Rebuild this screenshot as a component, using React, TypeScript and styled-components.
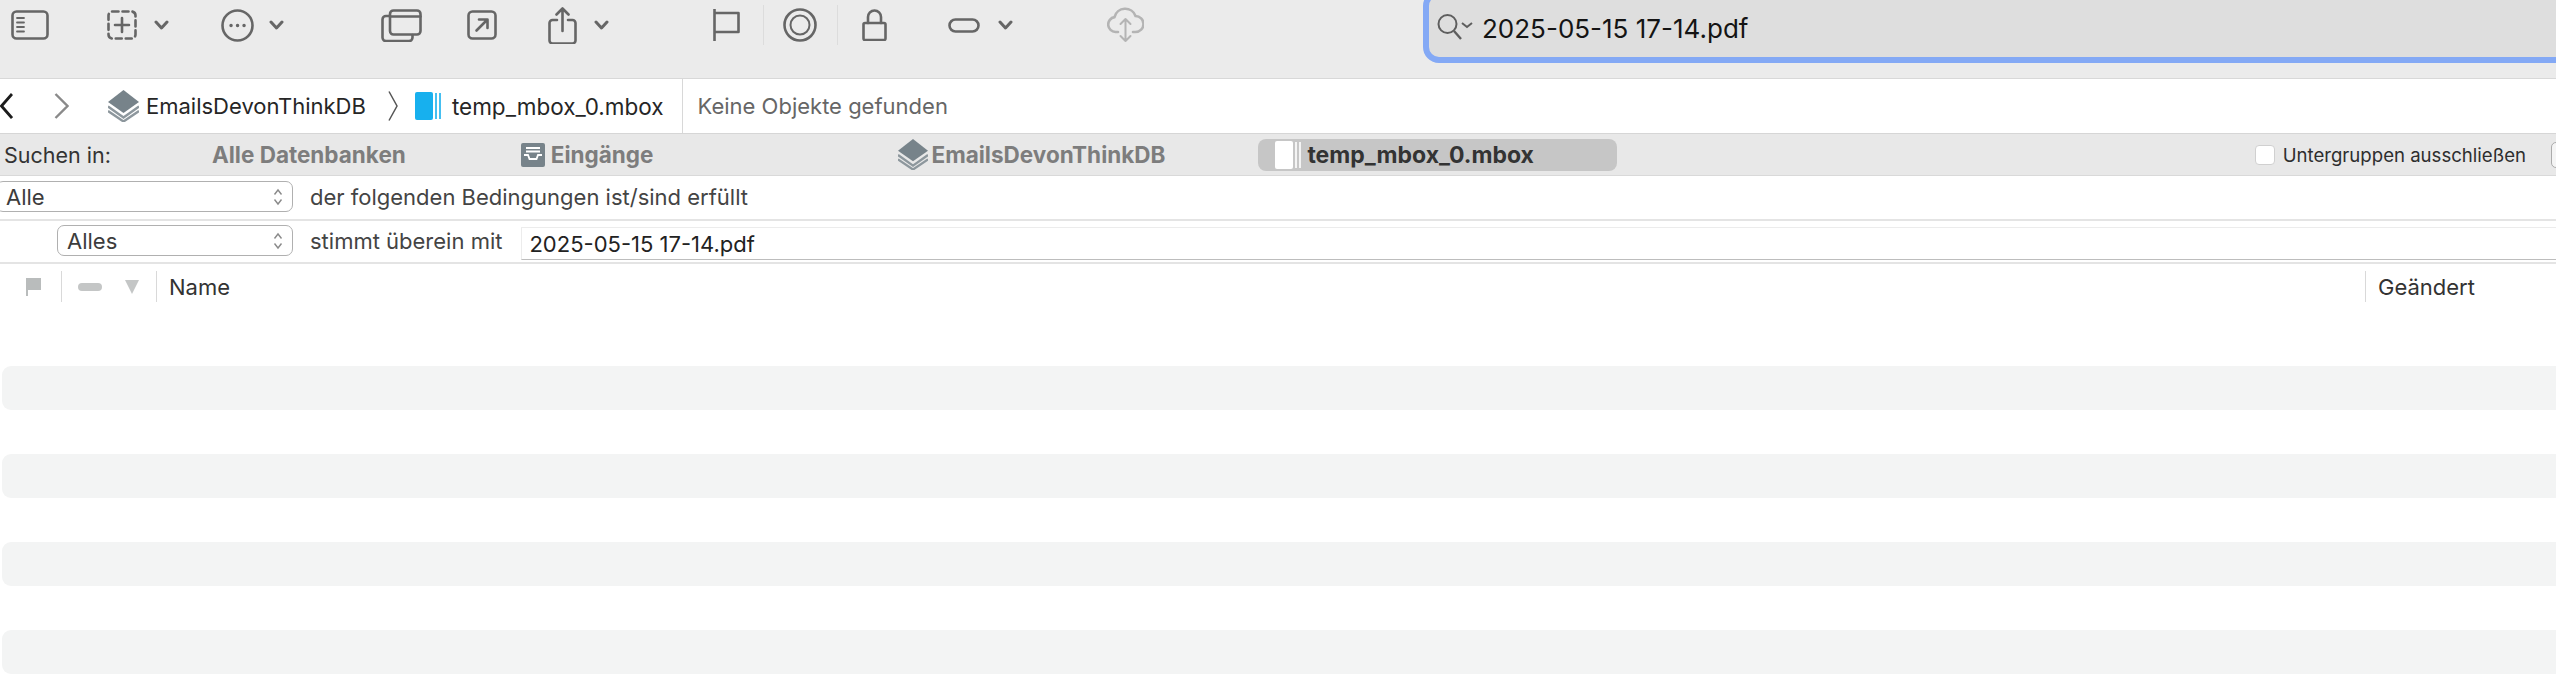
import styled, { createGlobalStyle } from 'styled-components';

const GlobalStyle = createGlobalStyle`
  html, body {
    margin: 0;
    padding: 0;
    background: #ffffff;
    overflow: hidden;
  }
  body {
    font-family: Inter, "Liberation Sans", sans-serif;
    color: #2a2a2a;
  }
`

const Window = styled.div`
  width: 2556px;
  height: 684px;
  overflow: hidden;
  display: flex;
  flex-direction: column;
`

const Toolbar = styled.div`
  flex: none;
  display: flex;
  align-items: center;
  padding-bottom: 28px;
  height: 50px;
  background: #ebebeb;
  border-bottom: 1px solid #d8d8d8;
`

const ToolIcon = styled.svg<{ $ml: number; $dim?: boolean }>`
  flex: none;
  margin-left: ${(p) => p.$ml}px;
  fill: none;
  stroke: ${(p) => (p.$dim ? '#b4b4b4' : '#666666')};
  stroke-width: 2.6;
  stroke-linecap: round;
  stroke-linejoin: round;
`

const ToolSeparator = styled.div<{ $ml: number }>`
  flex: none;
  width: 1px;
  height: 40px;
  margin-left: ${(p) => p.$ml}px;
  background: #dcdcdc;
`

const SearchField = styled.div`
  flex: none;
  align-self: flex-start;
  margin: -10px 0 0 279px;
  width: 1200px;
  height: 57px;
  padding-top: 4px;
  display: flex;
  align-items: center;
  background: #dedede;
  border: 6.5px solid #84a9f5;
  border-radius: 16px;
  box-sizing: content-box;
`

const SearchText = styled.span`
  margin-left: 9px;
  font-size: 26px;
  color: #141414;
`

const PathBar = styled.div`
  height: 54px;
  flex: none;
  display: flex;
  align-items: center;
  background: #ffffff;
  border-bottom: 1px solid #d6d6d6;
`

const NavIcon = styled.svg<{ $ml: number }>`
  flex: none;
  margin-left: ${(p) => p.$ml}px;
  fill: none;
`

const PathLabel = styled.span<{ $ml: number; $size: number }>`
  margin-left: ${(p) => p.$ml}px;
  font-size: ${(p) => p.$size}px;
  color: #262626;
  white-space: nowrap;
`

const PathDivider = styled.div`
  flex: none;
  width: 1px;
  height: 54px;
  margin-left: 18px;
  background: #d8d8d8;
`

const StatusText = styled.span`
  margin-left: 15px;
  font-size: 22px;
  color: #666666;
`

const ScopeBar = styled.div`
  height: 41px;
  flex: none;
  display: flex;
  align-items: center;
  background: #e8e8e8;
  border-bottom: 1px solid #d9d9d9;
`

const ScopeLabel = styled.span`
  margin-left: 4px;
  font-size: 21.5px;
  color: #333333;
`

const ScopeItem = styled.div<{ $left: number; $gap: number }>`
  margin-left: ${(p) => p.$left}px;
  display: flex;
  align-items: center;
  gap: ${(p) => p.$gap}px;
  font-size: 22.5px;
  font-weight: 700;
  color: #7d7d7d;
  white-space: nowrap;
`

const ScopePill = styled.div`
  margin-left: 93px;
  width: 359px;
  height: 32px;
  padding-left: 17px;
  box-sizing: border-box;
  display: flex;
  align-items: center;
  gap: 5px;
  background: #c6c6c6;
  border-radius: 8px;
  font-size: 23px;
  font-weight: 700;
  color: #333333;
`

const ScopeOptions = styled.div`
  margin-left: auto;
  display: flex;
  align-items: center;
  font-size: 18.6px;
  color: #2e2e2e;
`

const CheckBox = styled.span`
  width: 18px;
  height: 18px;
  margin-right: 8px;
  background: #ffffff;
  border: 1px solid #d0d0d0;
  border-radius: 4px;
`

const EdgeButton = styled.span`
  width: 20px;
  height: 24px;
  margin: 0 -17px 0 25px;
  background: #f4f4f4;
  border: 1px solid #ababab;
  border-radius: 5px;
`

const CriteriaRow = styled.div<{ $height: number }>`
  height: ${(p) => p.$height - 2}px;
  padding-bottom: 2px;
  flex: none;
  display: flex;
  align-items: center;
  background: #ffffff;
  border-bottom: 2px solid #e4e4e4;
  font-size: 22px;
  color: #444444;
`

const PopupButton = styled.div<{ $width: number; $ml: number }>`
  width: ${(p) => p.$width}px;
  height: 31px;
  margin-left: ${(p) => p.$ml}px;
  padding: 0 9px;
  flex: none;
  box-sizing: border-box;
  display: flex;
  align-items: center;
  justify-content: space-between;
  background: #ffffff;
  border: 1px solid #b0b0b0;
  border-radius: 7px;
  color: #3c3c3c;
`

const PopupArrows = styled.svg`
  flex: none;
  fill: none;
  stroke: #8a8a8a;
  stroke-width: 1.4;
`

const CriteriaText = styled.span`
  margin-left: 17px;
  white-space: nowrap;
`

const ValueField = styled.div`
  flex: 1;
  align-self: flex-start;
  margin: 6px 0 0 19px;
  height: 33px;
  padding-left: 7px;
  box-sizing: border-box;
  display: flex;
  align-items: center;
  background: #ffffff;
  border-top: 1px solid #ececec;
  border-left: 1px solid #ececec;
  border-bottom: 1px solid #bdbdbd;
  color: #222222;
`

const ColumnHeader = styled.div`
  height: 42px;
  padding-top: 3px;
  box-sizing: border-box;
  flex: none;
  display: flex;
  align-items: center;
  font-size: 22px;
  color: #333333;
`

const ColumnRule = styled.div<{ $ml: number }>`
  flex: none;
  width: 1px;
  height: 31px;
  margin-left: ${(p) => p.$ml}px;
  background: #d9d9d9;
`

const FlagMark = styled.svg`
  flex: none;
  margin-left: 26px;
  fill: #b9bcbc;
`

const LabelMark = styled.div`
  flex: none;
  width: 24px;
  height: 8px;
  margin-left: 16px;
  border-radius: 4px;
  background: #c4c6c6;
`

const SortMark = styled.svg`
  flex: none;
  margin-left: 23px;
  fill: #c4c6c6;
`

const ColumnName = styled.span`
  margin-left: 12px;
`

const ColumnChanged = styled.div`
  margin-left: auto;
  width: 191px;
  display: flex;
  align-items: center;
`

const ChangedRule = styled.div`
  width: 1px;
  height: 31px;
  margin-right: 12px;
  background: #d9d9d9;
`

const RowList = styled.div`
  padding: 60px 0 0 2px;
  display: flex;
  flex-direction: column;
  gap: 44px;
`

const StripeRow = styled.div`
  height: 44px;
  background: #f3f4f4;
  border-radius: 9px 0 0 9px;
`

const Chevron = ({ ml }: { ml: number }) => (
  <ToolIcon $ml={ml} width={15} height={10} viewBox="0 0 15 10" style={{ strokeWidth: 3 }}>
    <path d="M2 2l5.500 6L13 2" />
  </ToolIcon>
)

const StackIcon = ({ ml, size }: { ml: number; size: number }) => (
  <NavIcon $ml={ml} width={size} height={size + 1} viewBox="0 0 31 32">
    <path d="M15.500 0L31 12 15.500 23 0 12z" fill="#77838a" />
    <path d="M0 16.500l15.500 11 15.500-11M0 21l15.500 10.500L31 21" stroke="#8d979d" strokeWidth="2.400" />
  </NavIcon>
)

const BookIcon = ({ ml, light }: { ml: number; light?: boolean }) => (
  <NavIcon $ml={ml} width={27} height={28} viewBox="0 0 27 28">
    <rect x="0" y="0" width="18" height="28" rx="2" fill={light ? '#ffffff' : '#17b0ee'} />
    <path d="M21 1v26M25 1v26" stroke={light ? '#ffffff' : '#17b0ee'} strokeWidth="1.600" />
  </NavIcon>
)

const InboxIcon = () => (
  <NavIcon $ml={0} width={24} height={24} viewBox="0 0 24 24">
    <rect width="24" height="24" rx="2" fill="#77838a" />
    <path d="M5 5h14M5 8.500h14" stroke="#ffffff" strokeWidth="1.800" />
    <path d="M3 12h4l1.500 4h7L17 12h4" stroke="#ffffff" strokeWidth="1.800" />
  </NavIcon>
)

const Arrows = () => (
  <PopupArrows width={10} height={18} viewBox="0 0 10 18">
    <path d="M1.500 6.500L5 2l3.500 4.500M1.500 11.500L5 16l3.500-4.500" />
  </PopupArrows>
)

const App = (): JSX.Element => {
  const stripes = [1, 2, 3, 4]

  return (
    <Window>
      <GlobalStyle />
      <Toolbar>
        <ToolIcon $ml={11} width={38} height={30} viewBox="0 0 38 30">
          <rect x="1.500" y="1.500" width="35" height="27" rx="4" />
          <path d="M6 8h7M6 12.500h7M6 17h7M6 21.500h7" strokeWidth="1.800" />
        </ToolIcon>
        <ToolIcon $ml={58} width={30} height={30} viewBox="0 0 30 30">
          <rect x="1.500" y="1.500" width="27" height="27" rx="4" strokeDasharray="6 4" />
          <path d="M15 8v14M8 15h14" />
        </ToolIcon>
        <Chevron ml={17} />
        <ToolIcon $ml={52} width={33} height={33} viewBox="0 0 33 33">
          <circle cx="16.500" cy="16.500" r="15" />
          <path d="M10 16.500h.1M16.500 16.500h.1M23 16.500h.1" strokeWidth="3.400" />
        </ToolIcon>
        <Chevron ml={15} />
        <ToolIcon $ml={97} width={41} height={33} viewBox="0 0 41 33">
          <path d="M8.500 7H5a3.500 3.500 0 0 0-3.500 3.500v18A3.500 3.500 0 0 0 5 32h23a3.500 3.500 0 0 0 3.500-3.500V26" />
          <rect x="9" y="1.500" width="30.500" height="24" rx="3.500" />
          <path d="M9 7.500h30.500" />
        </ToolIcon>
        <ToolIcon $ml={45} width={30} height={30} viewBox="0 0 30 30">
          <rect x="1.500" y="1.500" width="27" height="27" rx="4" />
          <path d="M9.500 20.500L20 10M12 9.500h8.500V18" />
        </ToolIcon>
        <ToolIcon $ml={51} width={29} height={37} viewBox="0 0 29 37">
          <path d="M9 13H4.500a3 3 0 0 0-3 3v17.500a3 3 0 0 0 3 3h20a3 3 0 0 0 3-3V16a3 3 0 0 0-3-3H20" />
          <path d="M14.500 24V2M8.500 7.500l6-6 6 6" />
        </ToolIcon>
        <Chevron ml={17} />
        <ToolIcon $ml={104} width={27} height={32} viewBox="0 0 27 32">
          <path d="M1.500 0v32M1.500 4h24v19h-24" />
        </ToolIcon>
        <ToolSeparator $ml={23} />
        <ToolIcon $ml={19} width={34} height={34} viewBox="0 0 34 34">
          <circle cx="17" cy="17" r="15.500" />
          <circle cx="17" cy="17" r="9.500" strokeWidth="2" />
        </ToolIcon>
        <ToolSeparator $ml={20} />
        <ToolIcon $ml={24} width={25} height={32} viewBox="0 0 25 32">
          <rect x="1.500" y="14" width="22" height="17" rx="1.500" />
          <path d="M6 14V8a6.500 6.500 0 0 1 13 0v6" />
        </ToolIcon>
        <ToolIcon $ml={61} width={32} height={15} viewBox="0 0 32 15">
          <rect x="1.500" y="1.500" width="29" height="12" rx="6" />
        </ToolIcon>
        <Chevron ml={18} />
        <ToolIcon $ml={94} $dim width={37} height={36} viewBox="0 0 37 36">
          <path d="M11 25H8.500a7.500 7.500 0 0 1-1-14.900A11 11 0 0 1 28.500 9a8 8 0 0 1 0 16H26" />
          <path d="M18.500 12v22M13.500 17l5-5 5 5M13.500 29l5 5 5-5" strokeWidth="2" />
        </ToolIcon>
        <SearchField>
          <NavIcon $ml={8} width={36} height={26} viewBox="0 0 36 26" style={{ marginTop: -3 }}>
            <circle cx="10.500" cy="10" r="9" stroke="#5e5e5e" strokeWidth="2" />
            <path d="M17 17l7 8" stroke="#5e5e5e" strokeWidth="2.400" />
            <path d="M25 9l5 4 5-4" stroke="#5e5e5e" strokeWidth="2" />
          </NavIcon>
          <SearchText>2025-05-15 17-14.pdf</SearchText>
        </SearchField>
      </Toolbar>

      <PathBar>
        <NavIcon $ml={0} width={13} height={26} viewBox="0 0 13 26">
          <path d="M12 1L1.500 13 12 25" stroke="#1c1c1c" strokeWidth="2.800" />
        </NavIcon>
        <NavIcon $ml={41} width={15} height={26} viewBox="0 0 15 26">
          <path d="M1.500 1L13.500 13 1.500 25" stroke="#8a8a8a" strokeWidth="2.400" />
        </NavIcon>
        <StackIcon ml={39} size={31} />
        <PathLabel $ml={7} $size={22}>EmailsDevonThinkDB</PathLabel>
        <NavIcon $ml={22} width={10} height={30} viewBox="0 0 10 30">
          <path d="M1 0.500L9 15 1 29.500" stroke="#555555" strokeWidth="1.500" />
        </NavIcon>
        <BookIcon ml={17} />
        <PathLabel $ml={10} $size={22.5}>temp_mbox_0.mbox</PathLabel>
        <PathDivider />
        <StatusText>Keine Objekte gefunden</StatusText>
      </PathBar>

      <ScopeBar>
        <ScopeLabel>Suchen in:</ScopeLabel>
        <ScopeItem $left={101} $gap={0}>Alle Datenbanken</ScopeItem>
        <ScopeItem $left={115} $gap={6}>
          <InboxIcon />
          Eingänge
        </ScopeItem>
        <ScopeItem $left={244} $gap={4}>
          <StackIcon ml={0} size={30} />
          EmailsDevonThinkDB
        </ScopeItem>
        <ScopePill>
          <BookIcon ml={0} light />
          temp_mbox_0.mbox
        </ScopePill>
        <ScopeOptions>
          <CheckBox />
          Untergruppen ausschließen
          <EdgeButton />
        </ScopeOptions>
      </ScopeBar>

      <CriteriaRow $height={43}>
        <PopupButton $width={297} $ml={-4}>
          Alle
          <Arrows />
        </PopupButton>
        <CriteriaText>der folgenden Bedingungen ist/sind erfüllt</CriteriaText>
      </CriteriaRow>

      <CriteriaRow $height={41}>
        <PopupButton $width={236} $ml={57}>
          Alles
          <Arrows />
        </PopupButton>
        <CriteriaText>stimmt überein mit</CriteriaText>
        <ValueField>2025-05-15 17-14.pdf</ValueField>
      </CriteriaRow>

      <ColumnHeader>
        <FlagMark width={15} height={18} viewBox="0 0 15 18">
          <path d="M0 0h15v12H2v6H0z" />
        </FlagMark>
        <ColumnRule $ml={20} />
        <LabelMark />
        <SortMark width={14} height={14} viewBox="0 0 14 14">
          <path d="M0 0h14L7 14z" />
        </SortMark>
        <ColumnRule $ml={17} />
        <ColumnName>Name</ColumnName>
        <ColumnChanged>
          <ChangedRule />
          Geändert
        </ColumnChanged>
      </ColumnHeader>

      <RowList>
        {stripes.map((row) => (
          <StripeRow key={row} />
        ))}
      </RowList>
    </Window>
  )
}

export default App;
